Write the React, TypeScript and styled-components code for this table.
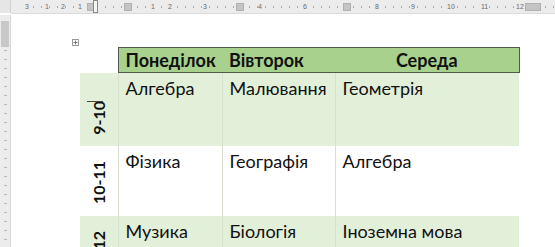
import React from 'react';
import styled, { createGlobalStyle } from 'styled-components';

const GlobalStyle = createGlobalStyle`
  html, body {
    margin: 0;
    padding: 0;
    background: #ffffff;
    overflow: hidden;
  }
  body {
    font-family: Lato, "Open Sans", sans-serif;
  }
`;

const rows = [
  { time: '9-10', cells: ['Алгебра', 'Малювання', 'Геометрія'], shaded: true, height: 73, caret: true },
  { time: '10-11', cells: ['Фізика', 'Географія', 'Алгебра'], shaded: false, height: 70, caret: false },
  { time: '11-12', cells: ['Музика', 'Біологія', 'Іноземна мова'], shaded: true, height: 70, caret: false },
];

const rulerMarks = [
  { x: 14, label: '3' }, { x: 34, label: '1' }, { x: 50, label: '2' }, { x: 67, label: '1' },
  { x: 140, label: '1' }, { x: 157, label: '2' }, { x: 192, label: '3' }, { x: 247, label: '4' },
  { x: 292, label: '6' }, { x: 364, label: '8' }, { x: 400, label: '9' }, { x: 436, label: '10' },
  { x: 470, label: '11' }, { x: 505, label: '12' },
];

const rulerBlocks = [
  { x: 76, w: 8 }, { x: 113, w: 8 }, { x: 225, w: 8 }, { x: 332, w: 8 }, { x: 514, w: 16 },
];

const App = () => {
  return (
    <React.Fragment>
      <GlobalStyle />
      <Screen>
        <TopRuler>
          <RulerCorner />
          <RulerStrip>
            {Array.from({ length: 68 }).map((_, i) => (
              <Tick key={i} style={{ left: 14 + i * 8 }} />
            ))}
            {rulerBlocks.map((b, i) => (
              <RulerBlock key={i} style={{ left: b.x, width: b.w }} />
            ))}
            <IndentMarker />
            {rulerMarks.map((m, i) => (
              <RulerNumber key={i} style={{ left: m.x }}>{m.label}</RulerNumber>
            ))}
          </RulerStrip>
        </TopRuler>
        <Body>
          <SideRuler>
            <SideMargin />
          </SideRuler>
          <Page>
            <MoveHandle>
              <svg width="7" height="7" viewBox="0 0 7 7">
                <rect x="0.5" y="0.5" width="6" height="6" fill="#fff" stroke="#9a9a9a" strokeWidth="1" />
                <path d="M3.5 1.5v4M1.5 3.5h4" stroke="#7a7a7a" strokeWidth="1" />
              </svg>
            </MoveHandle>
            <Table>
              <colgroup>
                <col style={{ width: 38 }} />
                <col style={{ width: 104 }} />
                <col style={{ width: 113 }} />
                <col style={{ width: 184 }} />
              </colgroup>
              <thead>
                <tr>
                  <CornerCell />
                  <HeadCell>Понеділок</HeadCell>
                  <HeadCell>Вівторок</HeadCell>
                  <HeadCell $center>Середа</HeadCell>
                </tr>
              </thead>
              <tbody>
                {rows.map((row) => (
                  <Row key={row.time} $shaded={row.shaded} style={{ height: row.height }}>
                    <TimeCell>
                      <TimeLabel>{row.time}</TimeLabel>
                      {row.caret && <Caret />}
                    </TimeCell>
                    {row.cells.map((c, i) => (
                      <Cell key={i}>{c}</Cell>
                    ))}
                  </Row>
                ))}
              </tbody>
            </Table>
          </Page>
        </Body>
      </Screen>
    </React.Fragment>
  );
};

const Screen = styled.div`
  width: 555px;
  height: 247px;
  overflow: hidden;
  display: flex;
  flex-direction: column;
`;

const TopRuler = styled.div`
  height: 15px;
  display: flex;
  background: #ffffff;
  flex-shrink: 0;
`;

const RulerCorner = styled.div`
  width: 10px;
  height: 13px;
  background: #e6e6e6;
  border-right: 1px solid #d0d0d0;
`;

const RulerStrip = styled.div`
  position: relative;
  flex: 1;
  height: 13px;
  background: #ececec;
  border-bottom: 1px solid #dcdcdc;
  overflow: hidden;
`;

const Tick = styled.div`
  position: absolute;
  top: 6px;
  width: 1px;
  height: 2px;
  background: #a8a8a8;
`;

const RulerBlock = styled.div`
  position: absolute;
  top: 3px;
  height: 8px;
  background: #c4c4c4;
  border: 1px solid #b0b0b0;
  box-sizing: border-box;
`;

const IndentMarker = styled.div`
  position: absolute;
  left: 82px;
  top: 0;
  width: 5px;
  height: 13px;
  border: 1px solid #8a8a8a;
  box-sizing: border-box;
  background: #f4f4f4;
`;

const RulerNumber = styled.div`
  position: absolute;
  top: 2px;
  font-family: "Liberation Sans", sans-serif;
  font-size: 7px;
  line-height: 10px;
  color: #6a6a6a;
  background: #ececec;
`;

const Body = styled.div`
  flex: 1;
  display: flex;
  min-height: 0;
`;

const SideRuler = styled.div`
  width: 10px;
  flex-shrink: 0;
  border-right: 1px solid #d6d6d6;
  padding-top: 6px;
  background-image: repeating-linear-gradient(
    to bottom,
    transparent 0,
    transparent 8px,
    #b8b8b8 8px,
    #b8b8b8 9px
  );
  background-size: 3px 100%;
  background-position: 4px 0;
  background-repeat: no-repeat;
  background-color: #ececec;
`;

const SideMargin = styled.div`
  height: 26px;
  margin: 0 1px;
  background: #c8c8c8;
`;

const Page = styled.div`
  position: relative;
  flex: 1;
  background: #ffffff;
  padding: 32px 0 0 69px;
`;

const MoveHandle = styled.div`
  position: absolute;
  left: 61px;
  top: 24px;
  line-height: 0;
`;

const Table = styled.table`
  border-collapse: collapse;
  table-layout: fixed;
  width: 439px;
  font-family: Lato, "Open Sans", sans-serif;
  color: #111111;
`;

const CornerCell = styled.th`
  border: none;
  background: #ffffff;
  padding: 0;
`;

const HeadCell = styled.th<{ $center?: boolean }>`
  height: 24px;
  padding: 0 7px;
  background: #a9d18e;
  border-top: 1px solid #4f5a48;
  border-bottom: 1px solid #4f5a48;
  border-left: none;
  border-right: none;
  &:nth-child(2) {
    border-left: 1px solid #4f5a48;
  }
  &:last-child {
    border-right: 1px solid #4f5a48;
  }
  font-size: 18px;
  font-weight: 700;
  text-align: ${(p) => (p.$center ? 'center' : 'left')};
  white-space: nowrap;
`;

const Row = styled.tr<{ $shaded: boolean }>`
  background: ${(p) => (p.$shaded ? '#e2efd9' : '#ffffff')};
`;

const Cell = styled.td`
  vertical-align: top;
  padding: 4px 7px 0 7px;
  font-size: 18px;
  line-height: 22px;
  border-left: 1px solid #d6dfd0;
  white-space: nowrap;
`;

const TimeCell = styled.td`
  position: relative;
  vertical-align: bottom;
  text-align: center;
  padding: 0 0 8px 0;
`;

const TimeLabel = styled.div`
  display: inline-block;
  writing-mode: vertical-rl;
  transform: rotate(180deg);
  font-size: 16px;
  font-weight: 700;
  line-height: 20px;
`;

const Caret = styled.div`
  position: absolute;
  left: 7px;
  top: 28px;
  width: 16px;
  height: 1px;
  background: #444444;
`;

export default App;
